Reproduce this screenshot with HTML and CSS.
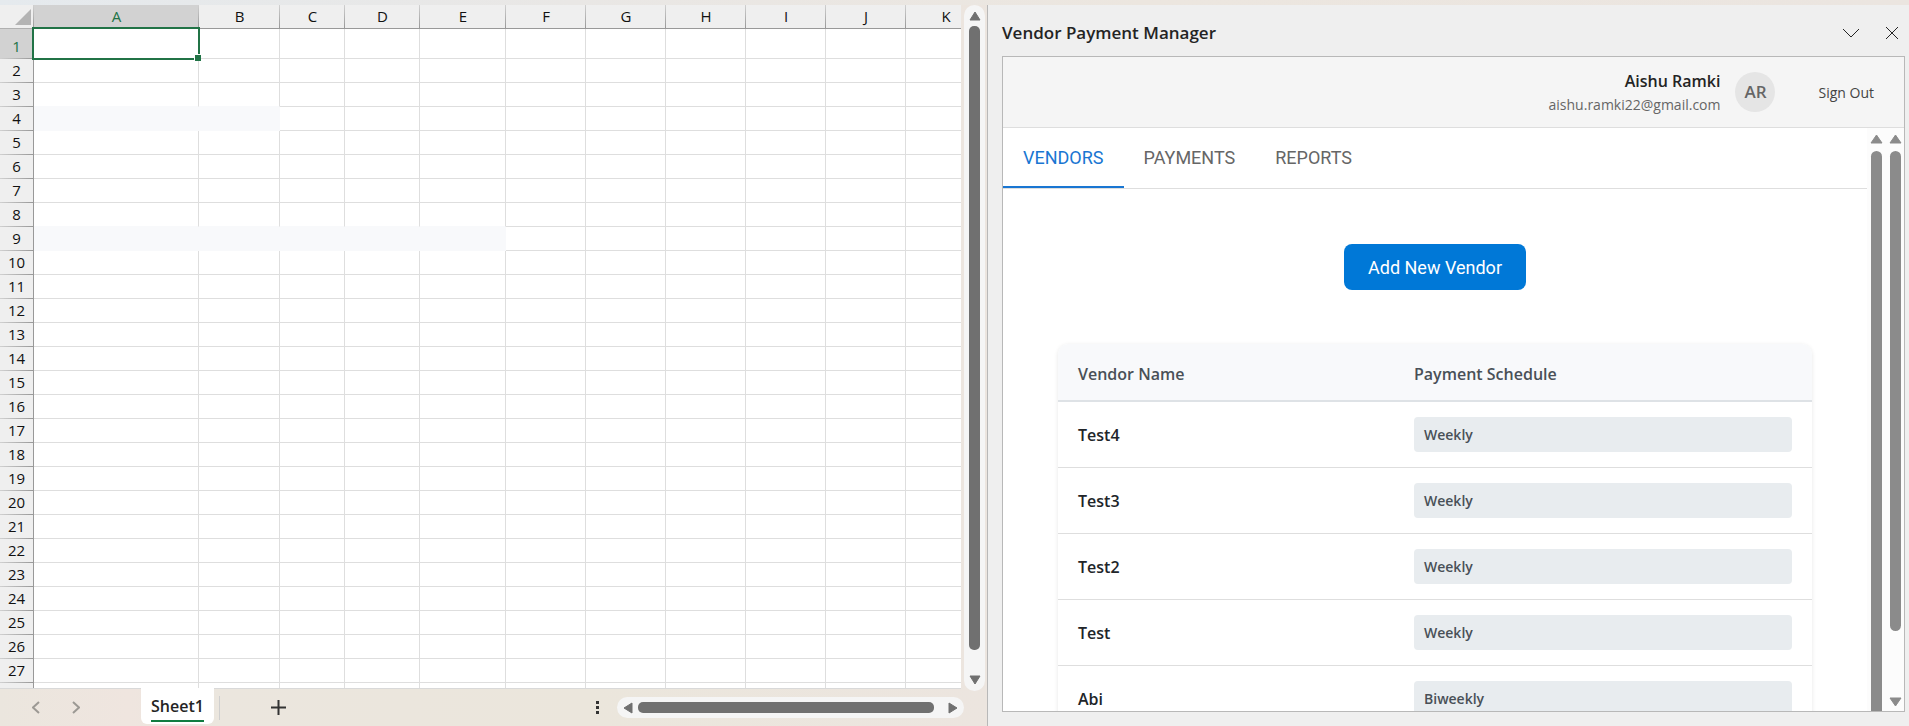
FILE: index.html
```html
<!DOCTYPE html>
<html lang="en">
<head>
<meta charset="utf-8">
<title>Vendor Payment Manager</title>
<link rel="stylesheet" href="styles.css">
</head>
<body>
<div class="app">
  <main class="workbook">
    <div class="sheet">
      <table class="grid" aria-label="Sheet1">
        <colgroup>
          <col class="col-head"><col class="col-a"><col class="col-b"><col class="col-c"><col class="col-d"><col class="col-e">
          <col class="col-std"><col class="col-std"><col class="col-std"><col class="col-std"><col class="col-std"><col class="col-std">
        </colgroup>
        <thead>
          <tr>
            <th class="corner"><svg width="16" height="16" viewBox="0 0 16 16" aria-hidden="true"><path d="M16 0V16H0z" fill="#b4b4b4"/></svg></th>
            <th class="active">A</th><th>B</th><th>C</th><th>D</th><th>E</th><th>F</th><th>G</th><th>H</th><th>I</th><th>J</th><th>K</th>
          </tr>
        </thead>
        <tbody id="grid-body"></tbody>
      </table>
    </div>
    <div class="vbar">
      <button type="button" class="arrow" aria-label="Scroll up"><svg width="12" height="10" viewBox="0 0 12 10"><path d="M6 1L11 9H1z"/></svg></button>
      <div class="thumb"></div>
      <button type="button" class="arrow" aria-label="Scroll down"><svg width="12" height="10" viewBox="0 0 12 10"><path d="M6 9L1 1h10z"/></svg></button>
    </div>
    <footer class="sheetbar">
      <nav class="sheetnav" aria-label="Sheets">
        <button type="button" aria-label="Previous sheet"><svg width="8" height="13" viewBox="0 0 8 13"><path d="M7 1L1 6.500L7 12"/></svg></button>
        <button type="button" aria-label="Next sheet"><svg width="8" height="13" viewBox="0 0 8 13"><path d="M1 1L7 6.500L1 12"/></svg></button>
      </nav>
      <button type="button" class="sheettab"><span>Sheet1</span></button>
      <button type="button" class="addsheet" aria-label="New sheet"><svg width="15" height="15" viewBox="0 0 15 15"><path d="M7.500 0V15M0 7.500H15"/></svg></button>
      <span class="more" aria-hidden="true"><i></i><i></i><i></i></span>
      <div class="hbar">
        <button type="button" class="arrow" aria-label="Scroll left"><svg width="10" height="12" viewBox="0 0 10 12"><path d="M1 6L9 1v10z"/></svg></button>
        <div class="thumb"></div>
        <button type="button" class="arrow" aria-label="Scroll right"><svg width="10" height="12" viewBox="0 0 10 12"><path d="M9 6L1 11V1z"/></svg></button>
      </div>
    </footer>
  </main>

  <aside class="pane">
    <header class="pane-title">
      <h1>Vendor Payment Manager</h1>
      <button type="button" aria-label="Pane options"><svg width="18" height="14" viewBox="0 0 18 14"><path d="M1 3L9 11L17 3"/></svg></button>
      <button type="button" aria-label="Close"><svg width="14" height="14" viewBox="0 0 14 14"><path d="M1 1L13 13M13 1L1 13"/></svg></button>
    </header>
    <div class="frame">
      <header class="userbar">
        <div class="user"><strong>Aishu Ramki</strong><span>aishu.ramki22@gmail.com</span></div>
        <div class="avatar">AR</div>
        <button type="button" class="signout">Sign Out</button>
      </header>
      <div class="body">
        <div class="content">
          <nav class="tabs">
            <button type="button" class="selected">VENDORS</button>
            <button type="button">PAYMENTS</button>
            <button type="button">REPORTS</button>
          </nav>
          <button type="button" class="add">Add New Vendor</button>
          <table class="vendors">
            <thead><tr><th>Vendor Name</th><th>Payment Schedule</th></tr></thead>
            <tbody>
              <tr><td>Test4</td><td><span class="chip">Weekly</span></td></tr>
              <tr><td>Test3</td><td><span class="chip">Weekly</span></td></tr>
              <tr><td>Test2</td><td><span class="chip">Weekly</span></td></tr>
              <tr><td>Test</td><td><span class="chip">Weekly</span></td></tr>
              <tr><td>Abi</td><td><span class="chip">Biweekly</span></td></tr>
            </tbody>
          </table>
        </div>
        <div class="rail rail-inner">
          <svg width="13" height="10" viewBox="0 0 13 10"><path d="M6.500 1L12 9H1z"/></svg>
          <div class="thumb"></div>
        </div>
        <div class="rail rail-outer">
          <svg width="13" height="10" viewBox="0 0 13 10"><path d="M6.500 1L12 9H1z"/></svg>
          <div class="thumb"></div>
          <svg width="13" height="10" viewBox="0 0 13 10"><path d="M6.500 9L1 1h11z"/></svg>
        </div>
      </div>
    </div>
  </aside>
</div>
<script src="grid.js"></script>
</body>
</html>
```
FILE: grid.js
```js
// Builds the empty worksheet rows; `filled` maps a row to its number of shaded cells.
const columns = 11;
const numberedRows = 27;
const filled = { 4: 2, 9: 5 };
const body = document.getElementById("grid-body");
for (let r = 1; r <= numberedRows + 1; r++) {
  const row = body.insertRow();
  const head = document.createElement("th");
  head.scope = "row";
  head.textContent = r <= numberedRows ? r : "";
  row.append(head);
  for (let c = 1; c <= columns; c++) {
    const cell = row.insertCell();
    if (c <= (filled[r] || 0)) cell.className = "filled";
    if (c <= (filled[r + 1] || 0)) cell.className = "above-filled";
  }
  if (r === 1) {
    row.className = "first";
    head.className = "active";
    row.cells[1].className = "selected";
    row.cells[1].innerHTML = '<div class="selection"></div>';
  }
}
```
FILE: styles.css
```css
* { box-sizing: border-box; }
body {
  margin: 0;
  font-family: "Open Sans", "Noto Sans", sans-serif;
  color: #242424;
}
button {
  margin: 0;
  padding: 0;
  border: 0;
  background: none;
  font: inherit;
  color: inherit;
}
svg { display: block; }
.app {
  display: grid;
  grid-template-columns: 987fr 922fr;
  height: 100vh;
  padding-top: 5px;
  overflow: hidden;
  background: linear-gradient(90deg, #e5eaee 0, #e9e7e5 30%, #ece6df 60%, #ebe5e0);
}

/* Workbook */
.workbook {
  display: grid;
  grid-template-columns: minmax(0, 1fr) 26px;
  grid-template-rows: minmax(0, 1fr) 37px;
  min-width: 0;
  min-height: 0;
  background: linear-gradient(90deg, #ebe6de 0, #efe5df 13%, #ebe6de 22%, #ebe6dc 60%, #ece5df);
}
.sheet {
  overflow: hidden;
  background: #fff;
  border-bottom: 1px solid #d9d9d9;
}
.grid {
  width: 986px;
  table-layout: fixed;
  border-collapse: separate;
  border-spacing: 0;
  font-size: 15px;
  line-height: 20px;
}
.col-head { width: 34px; }
.col-a { width: 165px; }
.col-b { width: 81px; }
.col-c { width: 65px; }
.col-d { width: 75px; }
.col-e { width: 86px; }
.col-std { width: 80px; }
.grid th {
  padding: 0;
  font-weight: 400;
  color: #111;
  background-color: #efefef;
  background-repeat: no-repeat;
}
.grid thead th {
  height: 24px;
  padding-bottom: 2px;
  border-bottom: 1px solid #999;
  background-image: linear-gradient(#d0d0d0, #999);
  background-size: 1px 100%;
  background-position: right;
}
.grid thead .corner {
  padding: 0 3px 3px 0;
  border-bottom-color: #b0b0b0;
  vertical-align: bottom;
}
.corner svg { margin-left: auto; }
.grid tbody th {
  height: 24px;
  border-right: 1px solid #999;
  background-image: linear-gradient(90deg, #d0d0d0, #999);
  background-size: 100% 1px;
  background-position: bottom;
  vertical-align: bottom;
  padding-bottom: 3px;
}
.grid .first th { height: 30px; }
.grid th.active {
  background-color: #d2d2d2;
  color: #217346;
}
.grid td {
  padding: 0;
  border-right: 1px solid #dedede;
  border-bottom: 1px solid #dedede;
}
.grid td.filled {
  background: #f8f9fb;
  border-color: #f8f9fb;
}
.grid td.above-filled { border-bottom-color: #f8f9fb; }
.grid td.selected { position: relative; }
.selection {
  position: absolute;
  inset: -2px;
  border: 2px solid #217346;
}
.selection::after {
  content: "";
  position: absolute;
  right: -3px;
  bottom: -3px;
  width: 6px;
  height: 6px;
  border: 1px solid #fff;
  border-width: 1px 0 0 1px;
  background: #217346;
}

.vbar, .hbar {
  display: flex;
  align-items: center;
  background: #f5f5f5;
  border-radius: 11px;
}
.vbar {
  flex-direction: column;
  width: 21px;
  margin: 0 0 -2px 3px;
  padding: 6px 0;
}
.arrow svg { fill: #707070; stroke: #707070; stroke-width: 1; stroke-linejoin: round; }
.vbar .thumb, .hbar .thumb {
  flex: 1;
  background: #707070;
  border-radius: 5px;
}
.vbar .thumb { width: 11px; margin: 5px 0 25px; }

.sheetbar {
  grid-column: 1 / -1;
  display: flex;
  align-items: center;
  padding-right: 23px;
}
.sheetnav {
  display: flex;
  gap: 32px;
  width: 141px;
  padding-left: 32px;
}
.sheetnav svg { fill: none; stroke: #9c9994; stroke-width: 2; }
.sheettab {
  align-self: flex-start;
  height: 36px;
  margin-top: -1px;
  padding: 1px 10px 0;
  background: #fff;
  border-radius: 0 0 6px 6px;
  font-size: 16px;
  font-weight: 600;
  line-height: 28px;
}
.sheettab span {
  display: block;
  border-bottom: 2px solid #107c41;
}
.addsheet {
  display: flex;
  align-items: center;
  height: 24px;
  margin-left: 5px;
  padding-left: 51px;
  border-left: 1px solid #cfcfcf;
}
.addsheet svg { stroke: #333; stroke-width: 2; }
.more {
  display: grid;
  gap: 2px;
  margin-left: auto;
  margin-right: 18px;
}
.more i { width: 3px; height: 3px; background: #333; }
.hbar {
  width: 347px;
  height: 21px;
  padding: 0 6px;
}
.hbar .thumb { height: 11px; margin: 0 14px 0 5px; }

/* Task pane */
.pane {
  display: flex;
  flex-direction: column;
  min-width: 0;
  min-height: 0;
  padding: 0 4px 14px 14px;
  border-left: 1px solid #b8b8b8;
  background: #efefef;
}
.pane-title {
  display: flex;
  align-items: center;
  gap: 25px;
  height: 51px;
  flex: none;
  padding: 4px 6px 0 0;
}
.pane-title h1 {
  flex: 1;
  margin: 0;
  font-size: 17px;
  font-weight: 600;
  line-height: 24px;
}
.pane-title svg { fill: none; stroke: #242424; stroke-width: 1; }
.frame {
  flex: 1;
  display: flex;
  flex-direction: column;
  min-height: 0;
  border: 1px solid #b8b8b8;
  background: #fff;
}
.userbar {
  display: flex;
  align-items: center;
  justify-content: flex-end;
  flex: none;
  height: 71px;
  padding-right: 30px;
  border-bottom: 1px solid #dedede;
  background: #f5f5f5;
}
.user {
  display: grid;
  padding-top: 2px;
  text-align: right;
  font-size: 14px;
  line-height: 24px;
  color: #666;
}
.user strong { font-size: 16px; font-weight: 600; color: #242424; }
.avatar {
  width: 40px;
  margin: 0 43px 0 15px;
  border-radius: 50%;
  background: #e5e5e5;
  text-align: center;
  font-size: 17px;
  font-weight: 600;
  line-height: 40px;
  color: #666;
}
.signout { font-size: 14px; color: #444; }
.body {
  flex: 1;
  display: grid;
  grid-template-columns: minmax(0, 1fr) 19px 18px;
  min-height: 0;
}
.content {
  display: flex;
  flex-direction: column;
  align-items: center;
  overflow: hidden;
}
.tabs {
  display: flex;
  align-self: stretch;
  flex: none;
  height: 61px;
  border-bottom: 1px solid #dedede;
  font-family: Roboto, sans-serif;
  font-size: 18px;
  color: #666;
}
.tabs button { padding: 0 20px; border-bottom: 2px solid transparent; }
.tabs .selected { border-bottom-color: #1976d2; color: #1976d2; }
.add {
  flex: none;
  height: 46px;
  margin: 55px 0 54px;
  padding: 0 24px;
  border-radius: 8px;
  background: #0078d7;
  color: #fff;
  font-family: Roboto, sans-serif;
  font-size: 18px;
}
.vendors {
  width: calc(100% - 110px);
  table-layout: fixed;
  border-collapse: separate;
  border-spacing: 0;
  border-radius: 10px;
  box-shadow: 0 1px 4px rgba(0, 0, 0, 0.1);
  font-size: 16px;
  line-height: 24px;
}
.vendors th {
  height: 58px;
  padding: 3px 20px 0;
  border-bottom: 2px solid #dee2e6;
  background: #f8f9fb;
  text-align: left;
  font-weight: 600;
  color: #495057;
}
.vendors th:first-child { width: 336px; border-top-left-radius: 10px; }
.vendors th:last-child { border-top-right-radius: 10px; }
.vendors td {
  height: 66px;
  padding: 0 20px;
  border-bottom: 1px solid #dedede;
  font-weight: 600;
  color: #212529;
}
.chip {
  display: block;
  padding: 0 10px;
  border-radius: 4px;
  background: #e8ecef;
  font-size: 14px;
  line-height: 35px;
  color: #495057;
}
.rail {
  display: flex;
  flex-direction: column;
  align-items: center;
  min-height: 0;
  padding-top: 6px;
  background: #fcfcfc;
}
.rail svg { flex: none; fill: #8b8b8b; stroke: #8b8b8b; stroke-linejoin: round; }
.rail .thumb {
  flex: 1;
  width: 11px;
  margin-top: 7px;
  border-radius: 6px 6px 0 0;
  background: #8b8b8b;
}
.rail-outer { padding-bottom: 4px; }
.rail-outer .thumb { margin-bottom: 66px; border-radius: 6px; }
```
